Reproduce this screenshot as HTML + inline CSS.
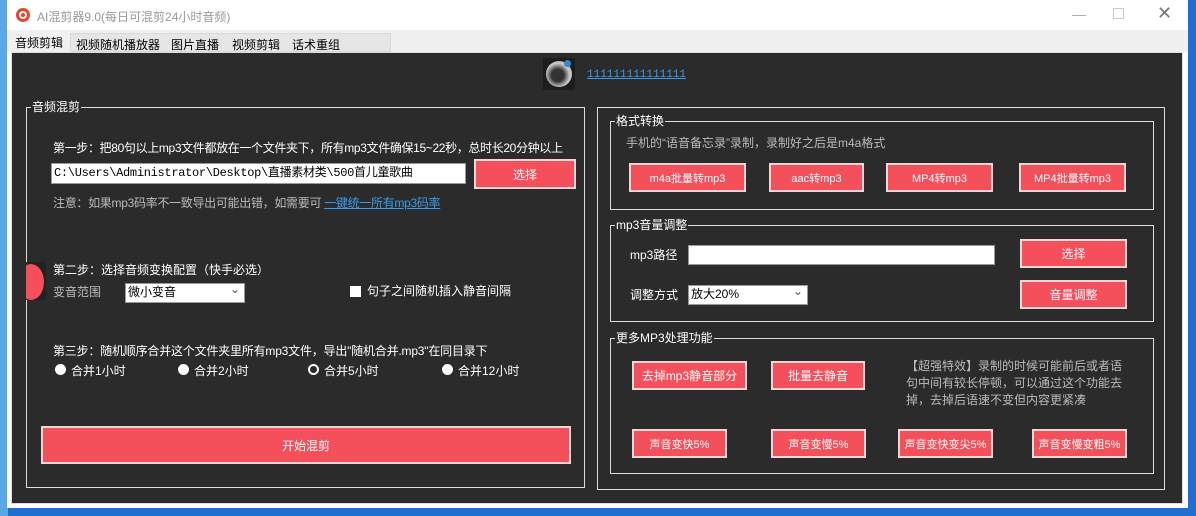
<!DOCTYPE html>
<html><head><meta charset="utf-8"><style>
*{margin:0;padding:0;box-sizing:border-box}
body{width:1196px;height:516px;overflow:hidden;background:#1e6fd0;position:relative;font-family:"Liberation Sans","Noto Sans CJK SC",sans-serif;font-size:12px}
.a{position:absolute;white-space:nowrap}
.t{color:#fff;font-size:12px;line-height:14px}
.g{color:#bbb;font-size:12px;line-height:14px}
.btn{position:absolute;background:#f4505c;border:2px solid #f2d6d6;color:#fff;font-size:11px;display:flex;align-items:center;justify-content:center;white-space:nowrap}
.box{position:absolute;border:1px solid #ddd}
.lg{position:absolute;background:#2b2b2b;color:#fff;font-size:12px;line-height:14px;padding:0 1px;top:-8px;left:4px}
.inp{position:absolute;background:#fff;border:1px solid #999;color:#000;font-size:12px;line-height:18px;padding-left:2px;font-family:"Liberation Mono","Noto Sans CJK SC",monospace}
.cmb{position:absolute;background:#fff;border:1px solid #999;color:#000;font-size:12px;line-height:17px;padding-left:2px}
.cmb:after{content:"⌄";position:absolute;right:4px;top:-3px;color:#555;font-size:12px}
.rad{position:absolute;width:11px;height:11px;border-radius:50%;background:#fff}
</style></head><body>
<div class="a" style="left:0;top:0;width:8px;height:516px;background:#5aa8e8"></div>
<div class="a" style="left:7px;top:0;width:1181px;height:508px;background:#fff"></div>
<div class="a" style="left:16px;top:8px;width:14px;height:14px;border-radius:50%;background:#e8452f"></div>
<div class="a" style="left:19px;top:11px;width:8px;height:8px;border-radius:50%;background:#fff"></div>
<div class="a" style="left:21px;top:13px;width:4px;height:4px;border-radius:50%;background:#e8452f"></div>
<div class="a" style="left:37px;top:8px;color:#999;font-size:12px">AI混剪器9.0(每日可混剪24小时音频)</div>
<div class="a" style="left:1072px;top:6px;color:#aaa;font-size:14px">—</div>
<div class="a" style="left:1113px;top:8px;width:11px;height:11px;border:1px solid #ccc"></div>
<div class="a" style="left:1157px;top:3px;color:#777;font-size:18px">✕</div>
<div class="a" style="left:7px;top:30px;width:1181px;height:22px;background:#f0f0f0"></div>
<div class="a" style="left:70px;top:33px;width:321px;height:19px;background:#e6e6e6;border:1px solid #d8d8d8"></div>
<div class="a" style="left:15px;top:34px;color:#000;font-size:12px">音频剪辑</div>
<div class="a" style="left:76px;top:36px;color:#000;font-size:12px">视频随机播放器</div>
<div class="a" style="left:171px;top:36px;color:#000;font-size:12px">图片直播</div>
<div class="a" style="left:232px;top:36px;color:#000;font-size:12px">视频剪辑</div>
<div class="a" style="left:292px;top:36px;color:#000;font-size:12px">话术重组</div>
<div class="a" style="left:11px;top:52px;width:1172px;height:452px;background:#2b2b2b;border:1px solid #ddd"></div>
<div class="a" style="left:543px;top:58px;width:32px;height:32px;background:#1d1d1d"></div>
<div class="a" style="left:546px;top:61px;width:26px;height:26px;border-radius:50%;background:radial-gradient(circle at 45% 55%,#333 30%,#ccc 60%,#888)"></div>
<div class="a" style="left:564px;top:60px;width:7px;height:7px;border-radius:50%;background:#2d8ad8"></div>
<div class="a" style="left:587px;top:69px;color:#3b9be8;font-size:11px;text-decoration:underline;font-family:'Liberation Mono',monospace">111111111111111</div>

<div class="box" style="left:26px;top:107px;width:559px;height:381px"><div class="lg">音频混剪</div></div>
<div class="a t" style="left:53px;top:141px;letter-spacing:-0.35px">第一步：把80句以上mp3文件都放在一个文件夹下，所有mp3文件确保15~22秒，总时长20分钟以上</div>
<div class="inp" style="left:51px;top:163px;width:415px;height:21px;letter-spacing:-0.3px">C:\Users\Administrator\Desktop\直播素材类\500首儿童歌曲</div>
<div class="btn" style="left:474px;top:159px;width:102px;height:30px;font-size:12px">选择</div>
<div class="a g" style="left:53px;top:196px;letter-spacing:-0.3px">注意：如果mp3码率不一致导出可能出错，如需要可 <span style="color:#3b9be8;text-decoration:underline">一键统一所有mp3码率</span></div>
<div class="a" style="left:26px;top:262px;width:20px;height:38px;background:#222"></div>
<div class="a" style="left:18px;top:264px;width:26px;height:36px;border-radius:50%;background:#f4505c;clip-path:inset(0 0 0 8px)"></div>
<div class="a t" style="left:53px;top:263px">第二步：选择音频变换配置（快手必选）</div>
<div class="a g" style="left:53px;top:285px">变音范围</div>
<div class="cmb" style="left:125px;top:283px;width:120px;height:20px">微小变音</div>
<div class="a" style="left:350px;top:286px;width:11px;height:11px;background:#fff"></div>
<div class="a t" style="left:367px;top:284px">句子之间随机插入静音间隔</div>
<div class="a t" style="left:53px;top:344px;letter-spacing:-0.2px">第三步：随机顺序合并这个文件夹里所有mp3文件，导出"随机合并.mp3"在同目录下</div>
<div class="rad" style="left:55px;top:364px"></div><div class="a t" style="left:71px;top:364px">合并1小时</div>
<div class="rad" style="left:178px;top:364px"></div><div class="a t" style="left:194px;top:364px">合并2小时</div>
<div class="rad" style="left:308px;top:364px;background:#2b2b2b;border:2px solid #fff"></div><div class="a t" style="left:324px;top:364px">合并5小时</div>
<div class="rad" style="left:442px;top:364px"></div><div class="a t" style="left:458px;top:364px">合并12小时</div>
<div class="btn" style="left:41px;top:426px;width:530px;height:38px;font-size:12px">开始混剪</div>

<div class="box" style="left:597px;top:107px;width:568px;height:383px"></div>
<div class="box" style="left:610px;top:121px;width:544px;height:89px"><div class="lg">格式转换</div></div>
<div class="a g" style="left:626px;top:136px">手机的“语音备忘录”录制，录制好之后是m4a格式</div>
<div class="btn" style="left:629px;top:163px;width:117px;height:29px">m4a批量转mp3</div>
<div class="btn" style="left:769px;top:163px;width:95px;height:29px">aac转mp3</div>
<div class="btn" style="left:886px;top:163px;width:107px;height:29px">MP4转mp3</div>
<div class="btn" style="left:1019px;top:163px;width:107px;height:29px">MP4批量转mp3</div>
<div class="box" style="left:610px;top:225px;width:544px;height:97px"><div class="lg">mp3音量调整</div></div>
<div class="a t" style="left:630px;top:248px">mp3路径</div>
<div class="inp" style="left:688px;top:245px;width:307px;height:20px"></div>
<div class="btn" style="left:1020px;top:239px;width:107px;height:29px;font-size:12px">选择</div>
<div class="a t" style="left:630px;top:288px">调整方式</div>
<div class="cmb" style="left:688px;top:285px;width:120px;height:20px">放大20%</div>
<div class="btn" style="left:1020px;top:280px;width:107px;height:29px;font-size:12px">音量调整</div>
<div class="box" style="left:610px;top:338px;width:544px;height:136px"><div class="lg">更多MP3处理功能</div></div>
<div class="btn" style="left:632px;top:361px;width:115px;height:29px;font-size:12px">去掉mp3静音部分</div>
<div class="btn" style="left:771px;top:361px;width:94px;height:29px;font-size:12px">批量去静音</div>
<div class="a g" style="left:906px;top:358px;line-height:17px;white-space:normal;width:220px">【超强特效】录制的时候可能前后或者语句中间有较长停顿，可以通过这个功能去掉，去掉后语速不变但内容更紧凑</div>
<div class="btn" style="left:632px;top:429px;width:95px;height:29px">声音变快5%</div>
<div class="btn" style="left:771px;top:429px;width:95px;height:29px">声音变慢5%</div>
<div class="btn" style="left:898px;top:429px;width:95px;height:29px">声音变快变尖5%</div>
<div class="btn" style="left:1032px;top:429px;width:95px;height:29px">声音变慢变粗5%</div>
</body></html>
